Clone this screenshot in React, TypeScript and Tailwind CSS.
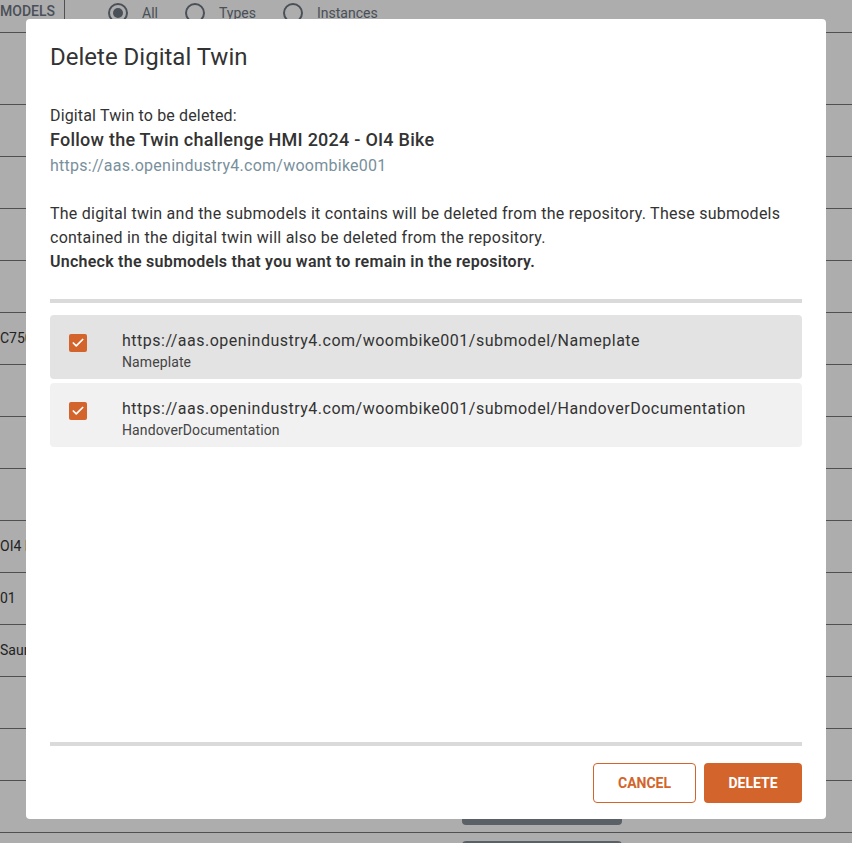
import { Check } from 'lucide-react';

const rowTexts: Record<number, string> = {
  4: 'C7500 Controller',
  8: 'OI4 Bike',
  9: '01',
  10: 'Saum',
};

const submodels = [
  { url: 'https://aas.openindustry4.com/woombike001/submodel/Nameplate', name: 'Nameplate', hover: true },
  { url: 'https://aas.openindustry4.com/woombike001/submodel/HandoverDocumentation', name: 'HandoverDocumentation', hover: false },
];

function BackgroundPage() {
  return (
    <div className="h-[843px] overflow-hidden bg-white text-[#333]">
      {/* filter bar */}
      <div className="flex h-[33px] items-start border-b border-[#777] text-[14px] text-[#6d7682]">
        <div className="flex h-[22px] w-[65px] items-center border-r border-[#777] font-medium">MODELS</div>
        <div className="ml-[43px] flex h-[26px] items-center gap-[14px]">
          <span className="flex h-[20px] w-[20px] items-center justify-center rounded-full border-2 border-[#6d7682]">
            <span className="h-[10px] w-[10px] rounded-full bg-[#6d7682]" />
          </span>
          <span className="mr-[13px]">All</span>
          <span className="h-[20px] w-[20px] rounded-full border-2 border-[#6d7682]" />
          <span className="mr-[13px]">Types</span>
          <span className="h-[20px] w-[20px] rounded-full border-2 border-[#6d7682]" />
          <span>Instances</span>
        </div>
      </div>
      <div className="h-[72px] border-b border-[#777]" />
      {Array.from({ length: 15 }).map((_, i) => (
        <div key={i} className="flex h-[52px] items-center border-b border-[#777] text-[14px]">
          <div className="w-[440px] whitespace-nowrap">{rowTexts[i] ?? ''}</div>
          {i >= 13 && <div className="ml-[22px] h-[36px] w-[160px] rounded-[4px] bg-[#848f99]" />}
        </div>
      ))}
    </div>
  );
}

function SubmodelRow({ url, name, hover }: { url: string; name: string; hover: boolean }) {
  return (
    <div className={`flex h-[64px] items-start rounded-[4px] ${hover ? 'bg-[#e3e3e3]' : 'bg-[#f1f1f1]'}`}>
      <div className="ml-[19px] mt-[19px] flex h-[18px] w-[18px] items-center justify-center rounded-[2px] bg-[#d2642c]">
        <Check className="h-[14px] w-[14px] text-white" strokeWidth={3} />
      </div>
      <div className="ml-[35px] mt-[15px] flex flex-col">
        <span className="text-[16px] leading-[22px] tracking-[0.5px] text-[#333]">{url}</span>
        <span className="text-[14px] leading-[20px] tracking-[0.1px] text-[#444]">{name}</span>
      </div>
    </div>
  );
}

export default function App() {
  return (
    <div className="relative h-[843px] w-[852px] overflow-hidden font-[Roboto,sans-serif]">
      <BackgroundPage />
      <div className="absolute inset-0 bg-black/[0.32]" />
      <div className="absolute inset-0 flex justify-center pt-[19px]">
        <div className="flex h-[800px] w-[800px] flex-col rounded-[4px] bg-white px-6 pb-4">
          <h2 className="mt-[22px] text-[24px] leading-[32px] text-[#333]">Delete Digital Twin</h2>

          <p className="mt-[32px] text-[16px] leading-[22px] tracking-[0.15px] text-[#333]">Digital Twin to be deleted:</p>
          <p className="mt-[1px] text-[18px] font-medium leading-[24px] tracking-[0.25px] text-[#333]">
            Follow the Twin challenge HMI 2024 - OI4 Bike
          </p>
          <p className="mt-[3px] text-[16px] leading-[22px] tracking-[0.25px] text-[#78909c]">
            https://aas.openindustry4.com/woombike001
          </p>

          <p className="mt-[25px] text-[16px] leading-[24px] tracking-[0.25px] text-[#333]">
            The digital twin and the submodels it contains will be deleted from the repository. These submodels
            contained in the digital twin will also be deleted from the repository.
            <br />
            <span className="font-semibold">Uncheck the submodels that you want to remain in the repository.</span>
          </p>

          <div className="mt-[25px] h-[4px] bg-[#dadada]" />

          <div className="mt-[12px] flex flex-col gap-[4px]">
            {submodels.map((s) => (
              <SubmodelRow key={s.name} {...s} />
            ))}
          </div>

          <div className="flex-1" />
          <div className="h-[4px] bg-[#dadada]" />

          <div className="mt-[17px] flex justify-end gap-[8px]">
            <button className="h-[40px] w-[103px] rounded-[4px] border border-[#d2642c] text-[14px] font-bold text-[#d2642c]">
              CANCEL
            </button>
            <button className="h-[40px] w-[98px] rounded-[4px] bg-[#d2642c] text-[14px] font-bold text-white">
              DELETE
            </button>
          </div>
        </div>
      </div>
    </div>
  );
}
